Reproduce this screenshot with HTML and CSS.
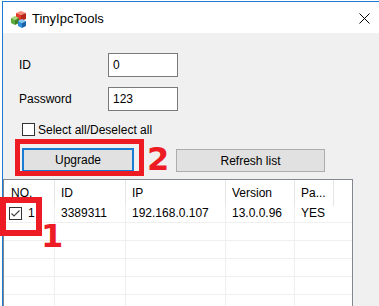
FILE: index.html
```html
<!DOCTYPE html>
<html lang="en">

<head>
	<meta charset="UTF-8">
	<title>TinyIpcTools</title>
	<link rel="stylesheet" href="styles.css">
</head>

<body>
	<div class="window">
		<div class="titlebar">
			<svg class="app-icon" width="17" height="17" viewBox="0 0 17 17">
				<!-- red cube -->
				<polygon points="6,2 11,0 16,2 11,4" fill="#f58a78" />
				<polygon points="6,2 11,4 11,10 6,8" fill="#e23b2b" />
				<polygon points="11,4 16,2 16,8 11,10" fill="#b8261a" />
				<!-- green cube -->
				<polygon points="1,7 5,5 9,7 5,9" fill="#a8d878" />
				<polygon points="1,7 5,9 5,14 1,12" fill="#5dab3b" />
				<polygon points="5,9 9,7 9,12 5,14" fill="#3f8228" />
				<!-- blue cube -->
				<polygon points="8,10 12,8 16,10 12,12" fill="#86c8f0" />
				<polygon points="8,10 12,12 12,17 8,15" fill="#2e8dd8" />
				<polygon points="12,12 16,10 16,15 12,17" fill="#1b63a8" />
			</svg>
			<span class="title">TinyIpcTools</span>
			<svg class="close" width="11" height="11" viewBox="0 0 11 11">
				<path d="M0.5 0.5 L10.5 10.5 M10.5 0.5 L0.5 10.5" stroke="#000" stroke-width="1" />
			</svg>
		</div>

		<div class="content">
			<div class="form">
				<div class="field">
					<span class="label">ID</span>
					<div class="input">0</div>
				</div>
				<div class="field">
					<span class="label">Password</span>
					<div class="input">123</div>
				</div>
				<div class="check-all">
					<span class="checkbox"></span>
					<span>Select all/Deselect all</span>
				</div>
				<div class="buttons">
					<div class="btn focused">Upgrade</div>
					<div class="btn refresh">Refresh list</div>
				</div>
			</div>

			<div class="list">
				<div class="row head">
					<div class="cell">NO.</div>
					<div class="cell">ID</div>
					<div class="cell">IP</div>
					<div class="cell">Version</div>
					<div class="cell">Pa...</div>
					<div class="cell"></div>
				</div>
				<div class="row">
					<div class="cell no">
						<svg class="row-check" width="13" height="13" viewBox="0 0 13 13">
							<rect x="0.5" y="0.5" width="12" height="12" fill="#fff" stroke="#333" />
							<path d="M2.5 6.5 L5 9 L10.5 3.5" fill="none" stroke="#444" stroke-width="1.2" />
						</svg>
						<span>1</span>
					</div>
					<div class="cell">3389311</div>
					<div class="cell">192.168.0.107</div>
					<div class="cell">13.0.0.96</div>
					<div class="cell">YES</div>
					<div class="cell"></div>
				</div>
				<div class="row"><div class="cell"></div><div class="cell"></div><div class="cell"></div><div class="cell"></div><div class="cell"></div><div class="cell"></div></div>
				<div class="row"><div class="cell"></div><div class="cell"></div><div class="cell"></div><div class="cell"></div><div class="cell"></div><div class="cell"></div></div>
				<div class="row"><div class="cell"></div><div class="cell"></div><div class="cell"></div><div class="cell"></div><div class="cell"></div><div class="cell"></div></div>
				<div class="row"><div class="cell"></div><div class="cell"></div><div class="cell"></div><div class="cell"></div><div class="cell"></div><div class="cell"></div></div>
				<div class="row"><div class="cell"></div><div class="cell"></div><div class="cell"></div><div class="cell"></div><div class="cell"></div><div class="cell"></div></div>
			</div>
		</div>
	</div>

	<!-- red annotations drawn over the screenshot -->
	<div class="mark mark-upgrade"></div>
	<span class="mark-num num-2">2</span>
	<div class="mark mark-row"></div>
	<span class="mark-num num-1">1</span>
</body>

</html>
```

FILE: styles.css
```css
:root {
	--accent: #1a7bd5;
	--face: #f0f0f0;
	--grid: #efefef;
	--red: #ed1c24;
}

body {
	margin: 0;
	background-color: #fff;
	font-family: "Liberation Sans", Arial, sans-serif;
	font-size: 12px;
	color: #000;
	overflow: hidden;
}

.window {
	margin: 1px 0 0 2px;
	border-top: 1px solid var(--accent);
	border-left: 1px solid var(--accent);
	height: 310px;
	background-color: var(--face);
}

.titlebar {
	display: flex;
	align-items: center;
	height: 31px;
	background-color: #fff;
}

.app-icon {
	margin-left: 7px;
	margin-top: 3px;
}

.title {
	margin-left: 5px;
	font-size: 13px;
	margin-top: 2px;
}

.close {
	margin-left: auto;
	margin-right: 9px;
	margin-top: 1px;
}

.content {
	padding-top: 20px;
}

.form {
	padding-left: 16px;
}

.field {
	display: flex;
	align-items: center;
	margin-bottom: 10px;
}

.label {
	width: 89px;
}

.input {
	box-sizing: border-box;
	width: 70px;
	height: 24px;
	line-height: 22px;
	padding-left: 4px;
	border: 1px solid #7a7a7a;
	background-color: #fff;
}

.check-all {
	display: flex;
	align-items: center;
	gap: 3px;
	margin-top: 12px;
	margin-left: 3px;
	height: 13px;
}

.checkbox {
	box-sizing: border-box;
	width: 13px;
	height: 13px;
	border: 1px solid #333;
	background-color: #fff;
}

.buttons {
	display: flex;
	align-items: flex-start;
	margin-top: 12px;
	margin-left: 3px;
}

.btn {
	box-sizing: border-box;
	height: 24px;
	line-height: 22px;
	text-align: center;
	background-color: #e1e1e1;
	border: 1px solid #adadad;
}

.btn.focused {
	width: 112px;
	border: 2px solid var(--accent);
	line-height: 20px;
}

.btn.refresh {
	width: 149px;
	height: 23px;
	margin-left: 42px;
	margin-top: 1px;
}

.list {
	margin-top: 7px;
	width: 350px;
	box-sizing: border-box;
	border: 1px solid #828790;
	border-bottom: none;
	background-color: #fff;
}

.row {
	display: grid;
	grid-template-columns: 51px 71px 100px 69px 39px 1fr;
	height: 18px;
}

.row .cell {
	box-sizing: border-box;
	padding-left: 6px;
	line-height: 17px;
	border-bottom: 1px solid var(--grid);
	border-right: 1px solid var(--grid);
	white-space: nowrap;
}

.row .cell:nth-child(5),
.row .cell:nth-child(6) {
	border-right: none;
}

.row.head {
	height: 25px;
}

.row.head .cell {
	line-height: 26px;
	border-bottom: none;
	border-right: 1px solid #e5e5e5;
}

.row.head .cell:nth-child(6) {
	border-right: none;
}

.row.head .cell:first-child {
	padding-left: 7px;
}

.cell.no {
	display: flex;
	align-items: center;
	gap: 6px;
	padding-left: 5px;
}

/* annotations */
.mark {
	position: absolute;
	box-sizing: border-box;
	border: 5px solid var(--red);
}

.mark-upgrade {
	left: 15px;
	top: 139px;
	width: 129px;
	height: 37px;
}

.mark-row {
	left: 0;
	top: 197px;
	width: 42px;
	height: 39px;
	border-width: 6px;
}

.mark-num {
	position: absolute;
	font-family: "DejaVu Sans", sans-serif;
	font-weight: bold;
	font-size: 32px;
	line-height: 32px;
	color: var(--red);
}

.num-2 {
	left: 147px;
	top: 143px;
}

.num-1 {
	left: 41px;
	top: 220px;
}
```
